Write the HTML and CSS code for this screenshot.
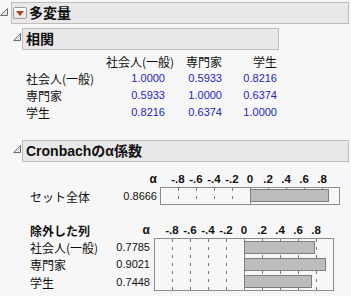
FILE: index.html
```html
<!DOCTYPE html>
<html lang="ja">
<head>
<meta charset="utf-8">
<link rel="stylesheet" href="styles.css">
</head>
<body>
<div class="report">
  <div class="node">
    <div class="node-head">
      <svg class="tri tri-top" width="8" height="8" viewBox="0 0 8 8"><polygon points="7.5,0.5 7.5,7.5 0.5,7.5"/></svg>
      <div class="head-box head-top">
        <span class="menu-btn"><svg width="8" height="5" viewBox="0 0 8 5"><polygon points="0,0 8,0 4,5"/></svg></span>
        <span class="title">多変量</span>
      </div>
    </div>
    <div class="node-body">
      <div class="node">
        <div class="node-head">
          <svg class="tri" width="8" height="8" viewBox="0 0 8 8"><polygon points="7.5,0.5 7.5,7.5 0.5,7.5"/></svg>
          <div class="head-box head-corr"><span class="title">相関</span></div>
        </div>
        <div class="corr-table">
          <span></span><span class="ch">社会人(一般)</span><span class="ch">専門家</span><span class="ch">学生</span>
          <span class="rl">社会人(一般)</span><span class="num">1.0000</span><span class="num">0.5933</span><span class="num">0.8216</span>
          <span class="rl">専門家</span><span class="num">0.5933</span><span class="num">1.0000</span><span class="num">0.6374</span>
          <span class="rl">学生</span><span class="num">0.8216</span><span class="num">0.6374</span><span class="num">1.0000</span>
        </div>
      </div>
      <div class="node cronbach">
        <div class="node-head">
          <svg class="tri" width="8" height="8" viewBox="0 0 8 8"><polygon points="7.5,0.5 7.5,7.5 0.5,7.5"/></svg>
          <div class="head-box head-cron"><span class="title">Cronbachのα係数</span></div>
        </div>
        <div class="alpha-grid alpha-all">
          <span></span>
          <span class="alpha">α</span>
          <div class="axis"><span>-.8</span><span>-.6</span><span>-.4</span><span>-.2</span><span>0</span><span>.2</span><span>.4</span><span>.6</span><span>.8</span></div>
          <span class="rl">セット全体</span>
          <span class="val">0.8666</span>
          <svg class="chart" width="180" height="18" viewBox="0 0 180 18">
            <rect class="frame" x="0.5" y="0.5" width="179" height="17"/>
            <g class="grid">
              <line x1="18.5" y1="1" x2="18.5" y2="17"/><line x1="36.5" y1="1" x2="36.5" y2="17"/><line x1="54.5" y1="1" x2="54.5" y2="17"/><line x1="72.5" y1="1" x2="72.5" y2="17"/>
              <line x1="108.5" y1="1" x2="108.5" y2="17"/><line x1="126.5" y1="1" x2="126.5" y2="17"/><line x1="144.5" y1="1" x2="144.5" y2="17"/><line x1="162.5" y1="1" x2="162.5" y2="17"/>
            </g>
            <line class="zero" x1="90.5" y1="1" x2="90.5" y2="17"/>
            <rect class="bar" x="90.5" y="2.5" width="78" height="12"/>
          </svg>
        </div>
        <div class="alpha-grid alpha-drop">
          <span class="rl bold">除外した列</span>
          <span class="alpha">α</span>
          <div class="axis"><span>-.8</span><span>-.6</span><span>-.4</span><span>-.2</span><span>0</span><span>.2</span><span>.4</span><span>.6</span><span>.8</span></div>
          <span class="rl r1">社会人(一般)</span><span class="val r1">0.7785</span>
          <span class="rl r2">専門家</span><span class="val r2">0.9021</span>
          <span class="rl r3">学生</span><span class="val r3">0.7448</span>
          <svg class="chart chart-drop" width="180" height="53" viewBox="0 0 180 53">
            <rect class="frame" x="0.5" y="0.5" width="179" height="52"/>
            <g class="grid">
              <line x1="18.5" y1="1" x2="18.5" y2="52"/><line x1="36.5" y1="1" x2="36.5" y2="52"/><line x1="54.5" y1="1" x2="54.5" y2="52"/><line x1="72.5" y1="1" x2="72.5" y2="52"/>
              <line x1="108.5" y1="1" x2="108.5" y2="52"/><line x1="126.5" y1="1" x2="126.5" y2="52"/><line x1="144.5" y1="1" x2="144.5" y2="52"/><line x1="162.5" y1="1" x2="162.5" y2="52"/>
            </g>
            <line class="zero" x1="90.5" y1="1" x2="90.5" y2="52"/>
            <rect class="bar" x="90.5" y="3.5" width="70" height="12"/>
            <rect class="bar" x="90.5" y="20.5" width="81" height="12"/>
            <rect class="bar" x="90.5" y="37.5" width="67" height="12"/>
          </svg>
        </div>
      </div>
    </div>
  </div>
</div>
</body>
</html>
```

FILE: styles.css
```css
html, body {
  margin: 0;
  padding: 0;
  background: #f7f7f7;
}
body {
  font-family: "Liberation Sans", "Noto Sans CJK JP", sans-serif;
  color: #111;
  width: 351px;
  height: 296px;
  overflow: hidden;
}
.report {
  padding: 2px 0 0 0;
}
.node-head {
  display: flex;
  align-items: flex-start;
}
.tri {
  flex: none;
  margin-top: 5px;
  margin-right: 1px;
}
.tri-top {
  margin-left: 0;
  margin-top: 6px;
  margin-right: 3px;
}
.tri polygon {
  fill: #e2e2e2;
  stroke: #707070;
  stroke-width: 1;
}
.head-box {
  box-sizing: border-box;
  height: 22px;
  background: #e9e7e7;
  border: 1px solid #bdbdbd;
  display: flex;
  align-items: center;
  padding-left: 3px;
}
.head-top {
  width: 338px;
  padding-left: 1px;
}
.head-corr {
  width: 257px;
}
.head-cron {
  width: 327px;
}
.menu-btn {
  box-sizing: border-box;
  width: 14px;
  height: 12px;
  border: 1px solid #9a9a9a;
  border-radius: 2px;
  background: linear-gradient(#fdfdfd, #e6e6e6);
  display: flex;
  align-items: center;
  justify-content: center;
  margin-right: 2px;
}
.menu-btn polygon {
  fill: #b83a2a;
}
.title {
  font-family: "Liberation Sans", "Noto Sans CJK JP", sans-serif;
  font-weight: bold;
  font-size: 14px;
  line-height: 20px;
  color: #111;
}
.node-body {
  padding-left: 13px;
  margin-top: 4px;
}
.corr-table {
  display: grid;
  grid-template-columns: 80px 59px 57px 55px;
  grid-auto-rows: 17px;
  margin: 3px 0 0 13px;
  align-items: center;
}
.ch, .num {
  text-align: right;
  white-space: nowrap;
}
.ch, .rl {
  font-family: "Noto Sans CJK JP", sans-serif;
  font-size: 12px;
  line-height: 17px;
  color: #111;
  white-space: nowrap;
}
.num, .val {
  font-family: "Liberation Sans", sans-serif;
  font-size: 11px;
  line-height: 17px;
}
.num {
  color: #2424c4;
}
.val {
  text-align: right;
  color: #111;
}
.cronbach {
  margin-top: 19px;
}
.alpha-grid {
  display: grid;
  margin-left: 17px;
  align-items: center;
}
.alpha-all {
  margin-top: 10px;
  grid-template-columns: 77px 47px 180px;
  grid-template-rows: 15px 18px;
  column-gap: 3px;
}
.alpha-drop {
  margin-top: 18px;
  grid-template-columns: 71px 45px 180px;
  grid-template-rows: 15px 18px 17px 18px;
  column-gap: 4px;
}
.bold {
  font-weight: bold;
}
.alpha {
  text-align: right;
  font-family: "Liberation Sans", sans-serif;
  font-weight: bold;
  font-size: 12px;
  line-height: 15px;
}
.axis {
  display: flex;
  padding-left: 9px;
  font-family: "Liberation Sans", sans-serif;
  font-weight: bold;
  font-size: 11.5px;
  line-height: 15px;
}
.axis span {
  width: 18px;
  text-align: center;
  flex: none;
}
.chart {
  display: block;
}
.chart-drop {
  grid-column: 3;
  grid-row: 2 / span 3;
}
.r1 { grid-row: 2; }
.r2 { grid-row: 3; }
.r3 { grid-row: 4; }
.rl.r1, .rl.r2, .rl.r3 { grid-column: 1; }
.val.r1, .val.r2, .val.r3 { grid-column: 2; }
.frame {
  fill: none;
  stroke: #8c8c8c;
}
.grid line {
  stroke: #7a7a7a;
  stroke-dasharray: 3 5;
}
.zero {
  stroke: #8c8c8c;
}
.bar {
  fill: #bcbcbc;
  stroke: #7e7e7e;
}
```
